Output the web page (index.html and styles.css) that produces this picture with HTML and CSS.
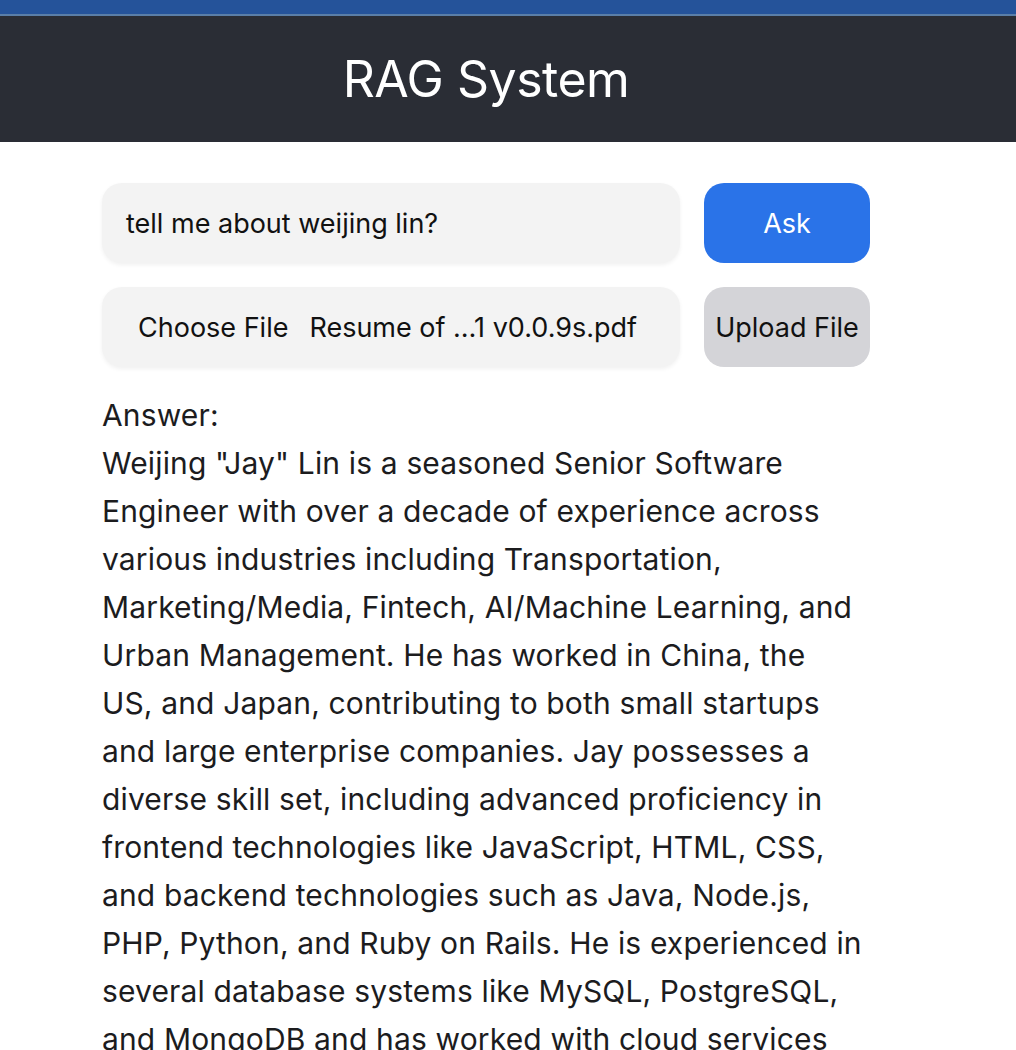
FILE: index.html
```html
<!DOCTYPE html>
<html lang="en">
<head>
<meta charset="utf-8">
<title>RAG System</title>
<link rel="stylesheet" href="styles.css">
</head>
<body>
<div class="topbar"></div>
<header class="header">
  <h1 class="title">RAG System</h1>
</header>
<main class="main">
  <div class="row">
    <div class="field">tell me about weijing lin?</div>
    <button class="btn btn-ask">Ask</button>
  </div>
  <div class="row">
    <div class="field field-file"><span class="choose">Choose File</span><span class="fname">Resume of …1 v0.0.9s.pdf</span></div>
    <button class="btn btn-upload">Upload File</button>
  </div>
  <div class="answer">
    <div class="answer-label">Answer:</div>
    <p class="answer-text">Weijing "Jay" Lin is a seasoned Senior Software Engineer with over a decade of experience across various industries including Transportation, Marketing/Media, Fintech, AI/Machine Learning, and Urban Management. He has worked in China, the<br>US, and Japan, contributing to both small startups<br>and large enterprise companies. Jay possesses a diverse skill set, including advanced proficiency in frontend technologies like JavaScript, HTML, CSS, and backend technologies such as Java, Node.js, PHP, Python, and Ruby on Rails. He is experienced in several database systems like MySQL, PostgreSQL, and MongoDB and has worked with cloud services like AWS and GCP.</p>
  </div>
</main>
</body>
</html>
```
FILE: styles.css
```css
html, body {
  margin: 0;
  padding: 0;
  background: #ffffff;
  font-family: Inter, "Noto Sans", "Liberation Sans", sans-serif;
  overflow: hidden;
}
.topbar {
  height: 14px;
  background: #25539a;
  border-bottom: 2px solid #5a7ea8;
}
.header {
  background: #2a2d35;
  height: 126px;
  display: flex;
  align-items: center;
  justify-content: center;
  padding-right: 44px;
}
.title {
  margin: 0;
  color: #ffffff;
  font-weight: 400;
  font-size: 50px;
  letter-spacing: -0.5px;
}
.main {
  width: 768px;
  margin-left: 102px;
  padding-top: 41px;
}
.row {
  display: flex;
  gap: 24px;
  margin-bottom: 24px;
}
.field {
  flex: 0 0 578px;
  height: 80px;
  box-sizing: border-box;
  background: #f3f3f3;
  border-radius: 20px;
  box-shadow: 0 2px 4px rgba(0,0,0,0.06);
  display: flex;
  align-items: center;
  padding-left: 24px;
  font-size: 27px;
  color: #111;
}
.field-file {
  padding-left: 36px;
  gap: 21px;
}
.btn {
  flex: 0 0 166px;
  height: 80px;
  border: none;
  border-radius: 20px;
  font-family: inherit;
  font-size: 27px;
  padding: 0;
}
.btn-ask {
  background: #2a73e8;
  color: #ffffff;
}
.btn-upload {
  background: #d4d4d8;
  color: #111;
}
.answer {
  margin-top: 10px;
  font-size: 30px;
  letter-spacing: 0.15px;
  line-height: 48px;
  color: #1c1c1e;
}
.answer-text {
  margin: 0;
}
```
